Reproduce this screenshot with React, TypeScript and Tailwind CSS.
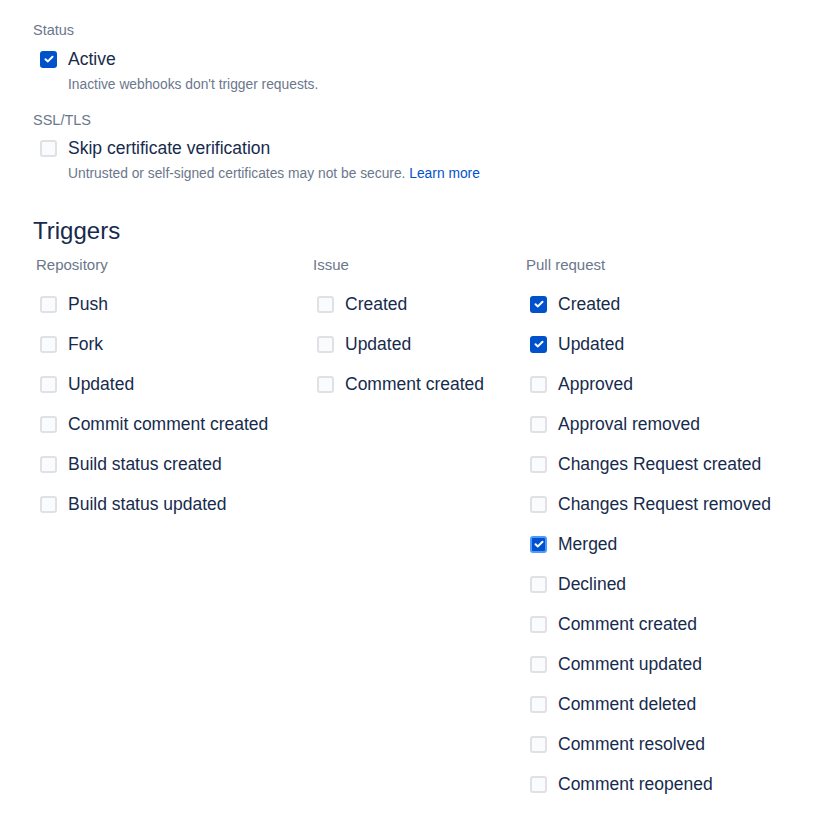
import React from "react";

const font = { fontFamily: '"Segoe UI", "Liberation Sans", Arial, sans-serif' };

function Box({ checked, focused }: { checked?: boolean; focused?: boolean }) {
	if (checked) {
		return (
			<span
				className={`flex h-[17px] w-[17px] shrink-0 items-center justify-center rounded-[3px] bg-[#0052cc] ${focused ? "border-2 border-[#4c9aff]" : ""}`}
			>
				<svg width="10" height="8" viewBox="0 0 10 8" fill="none">
					<path d="M1.5 4.2 L3.9 6.4 L8.5 1.7" stroke="white" strokeWidth="2" strokeLinecap="round" strokeLinejoin="round" />
				</svg>
			</span>
		);
	}
	return <span className="block h-[17px] w-[17px] shrink-0 rounded-[3px] border-2 border-[#dfe1e6] bg-[#fafbfc]" />;
}

function Check({ label, checked, focused }: { label: string; checked?: boolean; focused?: boolean }) {
	return (
		<div className="flex h-[40px] items-center">
			<div className="flex w-[32px] shrink-0 pl-[4px]">
				<Box checked={checked} focused={focused} />
			</div>
			<span className="text-[17.5px] text-[#172b4d]">{label}</span>
		</div>
	);
}

const repo = ["Push", "Fork", "Updated", "Commit comment created", "Build status created", "Build status updated"];
const issue = ["Created", "Updated", "Comment created"];
const pr: [string, boolean?, boolean?][] = [
	["Created", true],
	["Updated", true],
	["Approved"],
	["Approval removed"],
	["Changes Request created"],
	["Changes Request removed"],
	["Merged", true, true],
	["Declined"],
	["Comment created"],
	["Comment updated"],
	["Comment deleted"],
	["Comment resolved"],
	["Comment reopened"],
];

function Column({ title, width, children }: { title: string; width: string; children: React.ReactNode }) {
	return (
		<div className={width}>
			<div className="mb-[9px] text-[15px] leading-[20px] text-[#6b778c]">{title}</div>
			{children}
		</div>
	);
}

export default function App() {
	return (
		<div className="min-h-[818px] bg-white pl-[33px] pt-[20px]" style={font}>
			<div className="text-[14.5px] leading-[20px] text-[#6b778c]">Status</div>
			<div className="mt-[7px] flex h-[24px] items-center">
				<div className="flex w-[35px] pl-[7px]">
					<Box checked />
				</div>
				<span className="text-[17.5px] text-[#172b4d]">Active</span>
			</div>
			<div className="mt-[5px] pl-[35px] text-[13.8px] leading-[18px] text-[#6b778c]">
				Inactive webhooks don't trigger requests.
			</div>
			<div className="mt-[16px] text-[14.5px] leading-[20px] text-[#6b778c]">SSL/TLS</div>
			<div className="mt-[6px] flex h-[24px] items-center">
				<div className="flex w-[35px] pl-[7px]">
					<Box />
				</div>
				<span className="text-[17.5px] text-[#172b4d]">Skip certificate verification</span>
			</div>
			<div className="mt-[5px] pl-[35px] text-[13.8px] leading-[18px] text-[#6b778c]">
				Untrusted or self-signed certificates may not be secure.{" "}
				<span className="text-[#0052cc]">Learn more</span>
			</div>
			<div className="mt-[33px] text-[24px] leading-[30px] text-[#172b4d]">Triggers</div>
			<div className="mt-[9px] flex pl-[3px]">
				<Column title="Repository" width="w-[277px]">
					{repo.map((l) => (
						<Check key={l} label={l} />
					))}
				</Column>
				<Column title="Issue" width="w-[213px]">
					{issue.map((l) => (
						<Check key={l} label={l} />
					))}
				</Column>
				<Column title="Pull request" width="w-[280px]">
					{pr.map(([l, c, f]) => (
						<Check key={l} label={l} checked={c} focused={f} />
					))}
				</Column>
			</div>
		</div>
	);
}
